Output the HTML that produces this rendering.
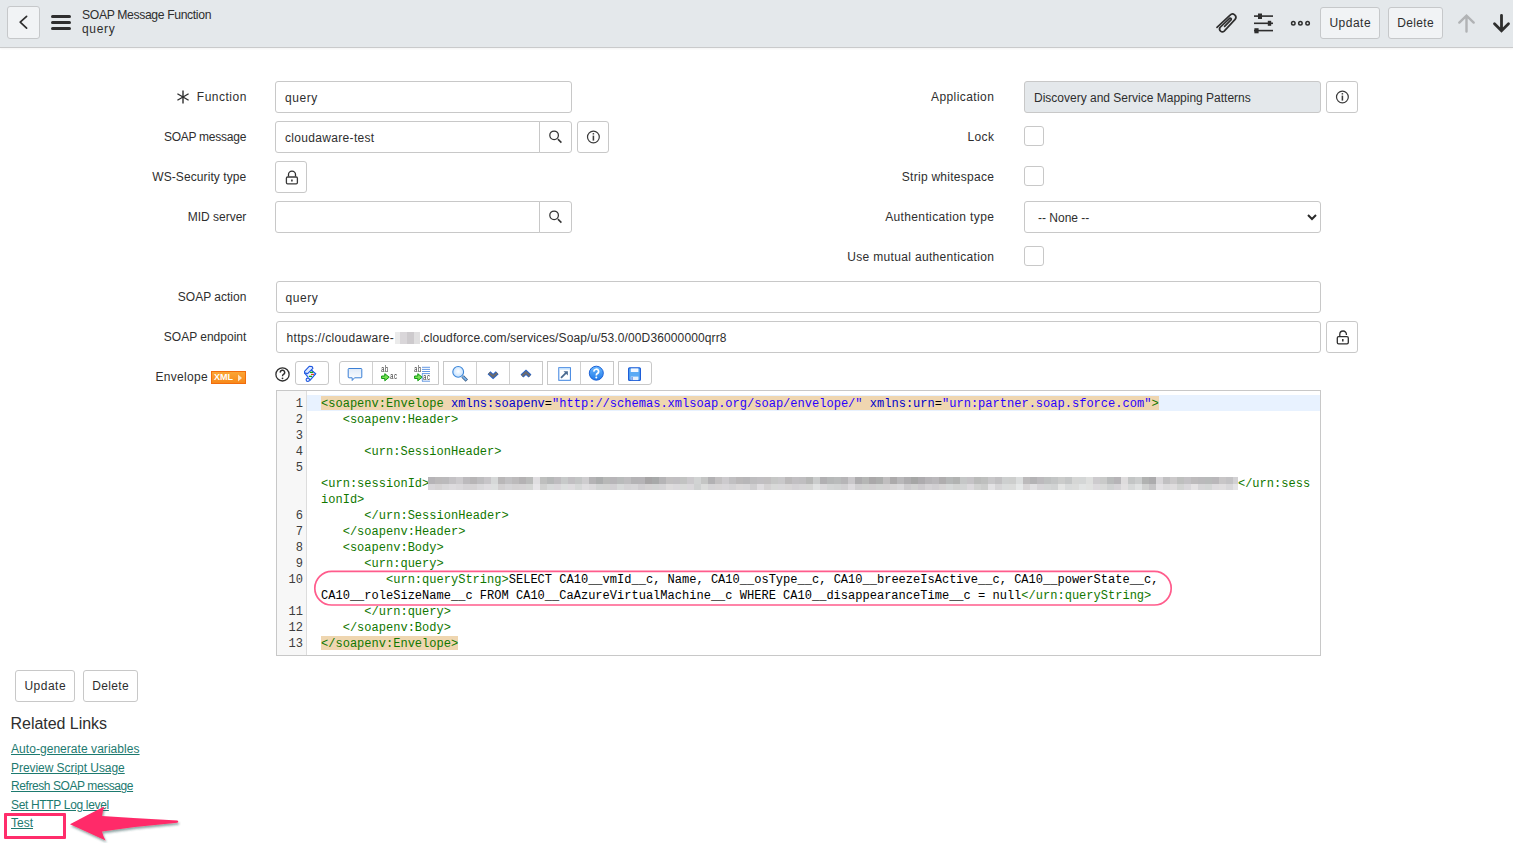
<!DOCTYPE html><html><head><meta charset="utf-8"><style>
*{box-sizing:border-box;margin:0;padding:0}
html,body{width:1513px;height:843px;overflow:hidden;background:#fff}
body{position:relative;font-family:"Liberation Sans",sans-serif;color:#2e2e2e;font-size:12px}
.a{position:absolute}
#hdr{position:absolute;left:0;top:0;width:1513px;height:48px;background:#e4e8eb;border-bottom:1px solid #c9cacb;box-shadow:0 1px 2px rgba(0,0,0,.05)}
.hbtn{position:absolute;height:32px;top:7px;border:1px solid #c6c8ca;border-radius:3px;background:#f1f3f5;color:#2e2e2e;font-size:12px;text-align:center;line-height:30px}
.bar{position:absolute;left:51px;width:20px;height:3px;border-radius:1.5px;background:#2e2e2e}
.lbl{position:absolute;white-space:nowrap;font-size:12px;line-height:32px;height:32px;color:#2e2e2e;text-align:right}
.inp{position:absolute;height:32px;border:1px solid #c8c8c8;border-radius:3px;background:#fff;font-size:12px;line-height:32px;padding-left:9px;white-space:nowrap;color:#2e2e2e;overflow:hidden}
.ibtn{position:absolute;width:32px;height:32px;border:1px solid #c8c8c8;border-radius:3px;background:#fff}
.ibtn svg,.sbtn svg{position:absolute;left:-1px;top:-1px}
.sbtn{position:absolute;width:33px;height:32px;border:1px solid #c8c8c8;border-radius:0 3px 3px 0;background:#fff}
.cb{position:absolute;left:1024px;width:20px;height:20px;border:1px solid #c8c8c8;border-radius:3px;background:#fff}
.tb{position:absolute;top:361px;height:24px;border:1px solid #c8c8c8;border-radius:3px;background:#fff}
.tb i{position:absolute;top:0;bottom:0;width:1px;background:#d0d0d0}
#ed{position:absolute;left:276px;top:390px;width:1045px;height:266px;border:1px solid #c8c8c8;background:#fff;overflow:hidden}
#gut{position:absolute;left:0;top:0;width:30px;height:264px;background:#f7f7f7;border-right:1px solid #dddddd}
.ln{position:absolute;width:26px;text-align:right;font-family:"Liberation Mono",monospace;font-size:12px;line-height:16px;color:#3c3c3c}
.row{position:absolute;left:44px;font-family:"Liberation Mono",monospace;font-size:12.04px;line-height:16px;white-space:pre;color:#000}
.t{color:#117700}.at{color:#0000cc}.s{color:#2a00ff}
.hl{background:linear-gradient(#efd6b0 calc(100% - 1px),transparent 0);padding-top:1px}
.lk{position:absolute;left:11px;font-size:12px;color:#1d7a6f;text-decoration:underline;white-space:nowrap;line-height:18px}
</style></head><body>
<div id="hdr">
<div class="hbtn" style="left:7px;top:6px;width:33px;height:33px"><svg class="a" style="left:0;top:0" width="32" height="32" viewBox="0 0 32 32"><path d="M18.6 9.4 L12.2 15.2 L18.6 21.2" fill="none" stroke="#2e2e2e" stroke-width="1.7" stroke-linecap="round" stroke-linejoin="round"/></svg></div>
<div class="bar" style="top:15px"></div><div class="bar" style="top:21px"></div><div class="bar" style="top:27px"></div>
<div class="a" style="left:82px;top:7.5px;font-size:12.2px;line-height:14px;white-space:nowrap;letter-spacing:-0.36px">SOAP Message Function</div><div class="a" style="left:82px;top:22px;font-size:12px;line-height:14px;white-space:nowrap;letter-spacing:0.7px">query</div>
<svg class="a" style="left:1212px;top:8px" width="30" height="28" viewBox="0 0 30 28"><path d="M5 19.3 L18.1 7.15 A3.3 3.3 0 0 1 23.1 11.45 L12.2 23.1 A2.8 2.8 0 0 1 8.0 19.5 L17.6 10.3 A1.1 1.1 0 0 1 19.2 11.7 L12.6 18.3" fill="none" stroke="#2e2e2e" stroke-width="1.7" stroke-linecap="round" stroke-linejoin="round"/></svg>
<svg class="a" style="left:1250px;top:8px" width="28" height="30" viewBox="0 0 28 30"><g fill="#2e2e2e"><rect x="4" y="7.3" width="19" height="1.6"/><rect x="4" y="14.5" width="19" height="1.6"/><rect x="4" y="21.8" width="19" height="1.6"/><rect x="8" y="5.5" width="4" height="5.5"/><rect x="17.8" y="12.8" width="3.4" height="5"/><rect x="4.4" y="20.2" width="4.2" height="5.1"/></g></svg>
<svg class="a" style="left:1288px;top:16px" width="26" height="14" viewBox="0 0 26 14"><g fill="none" stroke="#2e2e2e" stroke-width="1.5"><circle cx="5.3" cy="7.3" r="1.75"/><circle cx="12.4" cy="7.3" r="1.75"/><circle cx="19.6" cy="7.3" r="1.75"/></g></svg>
<div class="hbtn" style="left:1320px;width:60px;letter-spacing:0.5px;text-indent:0.5px">Update</div>
<div class="hbtn" style="left:1388px;width:55px;letter-spacing:0.35px;text-indent:0.35px">Delete</div>
<svg class="a" style="left:1455px;top:11px" width="22" height="24" viewBox="0 0 22 24"><path d="M11.5 20.6 V5.5 M4.3 11.6 L11.5 4.6 L18.7 11.6" fill="none" stroke="#b1b3b5" stroke-width="2.4" stroke-linecap="round" stroke-linejoin="miter"/></svg>
<svg class="a" style="left:1490px;top:12px" width="22" height="24" viewBox="0 0 22 24"><path d="M11.5 3.3 V18 M4.5 11.8 L11.5 18.8 L18.5 11.8" fill="none" stroke="#2e2e2e" stroke-width="2.8" stroke-linecap="round" stroke-linejoin="miter"/></svg>
</div>
<div class="lbl" style="right:1266.7px;top:81px;letter-spacing:0.49px;margin-right:-0.49px">Function</div>
<svg class="a" style="left:174px;top:88px" width="18" height="18" viewBox="0 0 18 18"><g stroke="#2e2e2e" stroke-width="1.4" stroke-linecap="butt"><path d="M9 2.5 V15.5"/><path d="M3.4 5.75 L14.6 12.25"/><path d="M3.4 12.25 L14.6 5.75"/></g></svg>
<div class="lbl" style="right:1266.7px;top:121px;letter-spacing:-0.25px;margin-right:0.25px">SOAP message</div>
<div class="lbl" style="right:1266.7px;top:161px;letter-spacing:0.09px;margin-right:-0.09px">WS-Security type</div>
<div class="lbl" style="right:1266.7px;top:201px;letter-spacing:0px;margin-right:0px">MID server</div>
<div class="lbl" style="right:1266.7px;top:281px;letter-spacing:0px;margin-right:0px">SOAP action</div>
<div class="lbl" style="right:1266.7px;top:321px;letter-spacing:0px;margin-right:0px">SOAP endpoint</div>
<div class="lbl" style="right:519.1px;top:81px;letter-spacing:0.42px;margin-right:-0.42px">Application</div>
<div class="lbl" style="right:519.1px;top:121px;letter-spacing:0.37px;margin-right:-0.37px">Lock</div>
<div class="lbl" style="right:519.1px;top:161px;letter-spacing:0.27px;margin-right:-0.27px">Strip whitespace</div>
<div class="lbl" style="right:519.1px;top:201px;letter-spacing:0.37px;margin-right:-0.37px">Authentication type</div>
<div class="lbl" style="right:519.1px;top:241px;letter-spacing:0.33px;margin-right:-0.33px">Use mutual authentication</div>
<div class="inp" style="left:275px;top:81px;width:297px;letter-spacing:0.55px">query</div>
<div class="inp" style="left:275px;top:121px;width:265px;border-radius:3px 0 0 3px;letter-spacing:0.32px">cloudaware-test</div>
<div class="sbtn" style="left:539px;top:121px"><svg width="32" height="32" viewBox="0 0 32 32"><circle cx="15.1" cy="14.3" r="4.3" fill="none" stroke="#333" stroke-width="1.25"/><path d="M18.9 18.1 L22.4 21.6" stroke="#333" stroke-width="1.5" stroke-linecap="butt"/></svg></div>
<div class="ibtn" style="left:577px;top:121px"><svg width="32" height="32" viewBox="0 0 32 32"><circle cx="16.4" cy="16" r="5.9" fill="none" stroke="#3a3a3a" stroke-width="1.2"/><rect x="15.65" y="12.1" width="1.5" height="1.4" fill="#3a3a3a"/><path d="M16.4 14.6 V19.6" stroke="#3a3a3a" stroke-width="1.55"/></svg></div>
<div class="ibtn" style="left:275px;top:161px"><svg width="32" height="32" viewBox="0 0 32 32"><path d="M13.5 15.5 V13.6 A3.5 3.5 0 0 1 20.5 13.6 V15.5" fill="none" stroke="#2e2e2e" stroke-width="1.3"/><rect x="11.4" y="16" width="11" height="6.8" rx="1.2" fill="none" stroke="#3a3a3a" stroke-width="1.3"/><path d="M16.9 18.4 V20.6" stroke="#2e2e2e" stroke-width="1.5"/></svg></div>
<div class="inp" style="left:275px;top:201px;width:265px;border-radius:3px 0 0 3px"></div>
<div class="sbtn" style="left:539px;top:201px"><svg width="32" height="32" viewBox="0 0 32 32"><circle cx="15.1" cy="14.3" r="4.3" fill="none" stroke="#333" stroke-width="1.25"/><path d="M18.9 18.1 L22.4 21.6" stroke="#333" stroke-width="1.5" stroke-linecap="butt"/></svg></div>
<div class="inp" style="left:1024px;top:81px;width:297px;background:#e4e8eb">Discovery and Service Mapping Patterns</div>
<div class="ibtn" style="left:1326px;top:81px"><svg width="32" height="32" viewBox="0 0 32 32"><circle cx="16.4" cy="16" r="5.9" fill="none" stroke="#3a3a3a" stroke-width="1.2"/><rect x="15.65" y="12.1" width="1.5" height="1.4" fill="#3a3a3a"/><path d="M16.4 14.6 V19.6" stroke="#3a3a3a" stroke-width="1.55"/></svg></div>
<div class="cb" style="top:126px"></div>
<div class="cb" style="top:166px"></div>
<div class="inp" style="left:1024px;top:201px;width:297px"><span style="margin-left:4px">-- None --</span><svg class="a" style="left:281px;top:9px" width="12" height="12" viewBox="0 0 12 12"><path d="M2 4 L6 8 L10 4" fill="none" stroke="#2a2a2a" stroke-width="2"/></svg></div>
<div class="cb" style="top:246px"></div>
<div class="inp" style="left:276px;top:281px;width:1045px;padding-left:8.5px;letter-spacing:0.55px">query</div>
<div class="inp" style="left:276px;top:321px;width:1045px;padding-left:9.5px"><span style="letter-spacing:0.33px">https://cloudaware-</span><span style="display:inline-block;vertical-align:-2px;margin-left:0.5px;margin-right:0.5px"><span style="display:inline-block;width:5px;height:12px;background:#ebebeb"></span><span style="display:inline-block;width:7px;height:12px;background:#d9d6d9"></span><span style="display:inline-block;width:7px;height:12px;background:#cdcacd"></span><span style="display:inline-block;width:6px;height:12px;background:#e0dfe0"></span></span><span style="letter-spacing:0.12px">.cloudforce.com/services/Soap/u/53.0/00D36000000qrr8</span></div>
<div class="ibtn" style="left:1326px;top:321px"><svg width="32" height="32" viewBox="0 0 32 32"><path d="M13.8 15.5 V13.3 A3.3 3.3 0 0 1 20.4 13.3 V14" fill="none" stroke="#2e2e2e" stroke-width="1.3"/><rect x="11.3" y="15.6" width="11" height="7.2" rx="1.3" fill="none" stroke="#2e2e2e" stroke-width="1.3"/><path d="M16.8 18 V20.6" stroke="#2e2e2e" stroke-width="1.5"/></svg></div>
<div class="a" style="left:155.5px;top:370px;font-size:12px;line-height:14px;white-space:nowrap;letter-spacing:0.29px">Envelope</div>
<div class="a" style="left:211px;top:371px;width:35px;height:13px;background:linear-gradient(#fba535,#f7891a);border:1px solid #f26c0c"><span class="a" style="left:2px;top:0px;color:#fff;font-weight:bold;font-size:9px;line-height:11px">XML</span><svg class="a" style="left:25px;top:2px" width="6" height="8" viewBox="0 0 6 8"><path d="M1 0.5 L5 4 L1 7.5Z" fill="#ffe3c0"/></svg></div>
<svg class="a" style="left:274px;top:366px" width="17" height="17" viewBox="0 0 17 17"><circle cx="8.5" cy="8.4" r="6.6" fill="none" stroke="#2e2e2e" stroke-width="1.3"/><path d="M6.3 6.6 A2.2 2.2 0 1 1 9.4 8.4 C8.6 8.8 8.5 9.3 8.5 10.3" fill="none" stroke="#2e2e2e" stroke-width="1.4"/><circle cx="8.5" cy="12.3" r="0.9" fill="#2e2e2e"/></svg>
<div class="tb" style="left:295px;width:34px;border-radius:3px"></div>
<div class="tb" style="left:339px;width:100px;border-radius:3px 0 0 3px"><i style="left:32px"></i><i style="left:65px"></i></div>
<div class="tb" style="left:443px;width:100px;border-radius:0"><i style="left:32px"></i><i style="left:65px"></i></div>
<div class="tb" style="left:547px;width:67px;border-radius:0"><i style="left:32px"></i></div>
<div class="tb" style="left:618px;width:34px;border-radius:0 3px 3px 0"></div>
<svg class="a" style="left:300px;top:362px" width="20" height="22" viewBox="300 362 20 22"><path d="M310.5 369.5 L315.6 373.8 L309.8 380.3 M304.3 372.6 L308.4 377.3" fill="none" stroke="#2463e6" stroke-width="1.1"/><path d="M310.5 369.8 L315.2 373.8 L309.8 380 L308 377.5 L304.5 373 Z" fill="#eef4ff"/><path d="M310.5 369.5 L315.6 373.8 L309.8 380.3 M304.3 372.6 L308.4 377.3" fill="none" stroke="#2463e6" stroke-width="1.1"/><path d="M304.5 371.3 L309.2 366.3 L312.2 366.6 L312.9 368.3 L307.6 373.6 L304.6 372.8 Z" fill="#dde9ff" stroke="#1f58e0" stroke-width="1.1" stroke-linejoin="round"/><circle cx="307.8" cy="379.8" r="1.7" fill="#eef4ff" stroke="#1f58e0" stroke-width="1.1"/><path d="M310 372.4 H313 M309 376.4 H312" stroke="#11aa11" stroke-width="1.1"/><path d="M311 374.4 H314" stroke="#e23a10" stroke-width="1.1"/></svg>
<svg class="a" style="left:345px;top:365px" width="20" height="18" viewBox="345 365 20 18"><defs><linearGradient id="gb" x1="0" y1="0" x2="0" y2="1"><stop offset="0" stop-color="#dfeaf8"/><stop offset="1" stop-color="#ffffff"/></linearGradient></defs><path d="M349 368.5 H361 A0.8 0.8 0 0 1 361.8 369.3 V377 A0.8 0.8 0 0 1 361 377.8 H354.5 L352.2 380.5 V377.8 H349 A0.8 0.8 0 0 1 348.2 377 V369.3 A0.8 0.8 0 0 1 349 368.5 Z" fill="url(#gb)" stroke="#3a7fd5" stroke-width="1"/></svg>
<div class="a" style="left:380.5px;top:366px;font-family:&quot;Liberation Mono&quot;,monospace;color:#3a3a3a;font-size:8.5px;line-height:8px;position:absolute;transform-origin:0 0;transform:scaleX(0.72)">ab</div>
<svg class="a" style="left:380.5px;top:372.5px" width="9" height="9" viewBox="380.5 372.5 9 9"><path d="M381.1 375.5 H384.3 V373.2 L388.7 376.7 L384.3 380.3 V378.0 H381.1 Z" fill="#77e055" stroke="#0f9a0f" stroke-width="1"/></svg>
<div class="a" style="left:389.5px;top:373px;font-family:&quot;Liberation Mono&quot;,monospace;color:#3a3a3a;font-size:8.5px;line-height:8px;position:absolute;transform-origin:0 0;transform:scaleX(0.72)">ac</div>
<div class="a" style="left:413.5px;top:366px;font-family:&quot;Liberation Mono&quot;,monospace;color:#3a3a3a;font-size:8.5px;line-height:8px;position:absolute;transform-origin:0 0;transform:scaleX(0.72)">ab</div>
<svg class="a" style="left:413.5px;top:372.5px" width="9" height="9" viewBox="413.5 372.5 9 9"><path d="M414.1 375.5 H417.3 V373.2 L421.7 376.7 L417.3 380.3 V378.0 H414.1 Z" fill="#77e055" stroke="#0f9a0f" stroke-width="1"/></svg>
<div class="a" style="left:422.5px;top:373.5px;font-family:&quot;Liberation Mono&quot;,monospace;color:#3a3a3a;font-size:8.5px;line-height:8px;position:absolute;transform-origin:0 0;transform:scaleX(0.72)">ac</div>
<svg class="a" style="left:420px;top:366px" width="12" height="17" viewBox="420 366 12 17"><path d="M422 367.3 H430 M422 369.4 H430 M422 371.5 H430 M422 373.6 H430 M422 381.2 H430" stroke="#3d7fdc" stroke-width="0.8"/><path d="M422.3 373.6 V381.2" stroke="#3d7fdc" stroke-width="0.7"/></svg>
<svg class="a" style="left:450px;top:363px" width="20" height="20" viewBox="450 363 20 20"><defs><radialGradient id="mg" cx="0.5" cy="0.45" r="0.6"><stop offset="0" stop-color="#ffffff"/><stop offset="1" stop-color="#b9dcff"/></radialGradient></defs><path d="M462.6 376.4 L466.8 380.6" stroke="#3a5a80" stroke-width="3.4" stroke-linecap="butt"/><path d="M462.8 376.6 L466.4 380.2" stroke="#7ab6f0" stroke-width="1.8"/><circle cx="458.2" cy="371.9" r="5.4" fill="url(#mg)" stroke="#3d86d8" stroke-width="1.1"/></svg>
<svg class="a" style="left:485px;top:368px" width="16" height="13" viewBox="485 368 16 13"><path d="M489 372.8 L493.1 376.5 L497.2 372.8" fill="none" stroke="#1f62d0" stroke-width="4.2" stroke-linejoin="miter"/><path d="M489 372.8 L493.1 376.5 L497.2 372.8" fill="none" stroke="#6b6b70" stroke-width="2.4" stroke-linejoin="miter"/></svg>
<svg class="a" style="left:518px;top:367px" width="16" height="13" viewBox="518 367 16 13"><path d="M522 376 L526 372.3 L530 376" fill="none" stroke="#1f62d0" stroke-width="4.2" stroke-linejoin="miter"/><path d="M522 376 L526 372.3 L530 376" fill="none" stroke="#6b6b70" stroke-width="2.4" stroke-linejoin="miter"/></svg>
<svg class="a" style="left:556px;top:365px" width="17" height="18" viewBox="556 365 17 18"><rect x="558.8" y="367.7" width="11.6" height="12.6" fill="#fff" stroke="#3b82e0" stroke-width="1"/><rect x="559.3" y="368.2" width="10.6" height="1.4" fill="#bfe0ff"/><path d="M561 377.8 L566 372.8" stroke="#4a6a90" stroke-width="1.8"/><path d="M563.5 371.2 H567.9 V375.6 Z" fill="#4a6a90"/></svg>
<svg class="a" style="left:587px;top:364px" width="19" height="19" viewBox="587 364 19 19"><defs><linearGradient id="hg" x1="0" y1="0" x2="0" y2="1"><stop offset="0" stop-color="#6ab8ff"/><stop offset="1" stop-color="#1f7ae8"/></linearGradient></defs><circle cx="596.3" cy="373.2" r="7" fill="url(#hg)" stroke="#1e62d6" stroke-width="1"/><path d="M594 371.6 A2.3 2.3 0 1 1 597.2 373.6 C596.5 374 596.3 374.4 596.3 375.4" fill="none" stroke="#fff" stroke-width="1.7"/><circle cx="596.3" cy="377.6" r="1" fill="#fff"/></svg>
<svg class="a" style="left:626px;top:365px" width="17" height="18" viewBox="626 365 17 18"><rect x="628.6" y="367.8" width="11.8" height="12.6" rx="1" fill="#5aaaf5" stroke="#1e5ed8" stroke-width="1.2"/><rect x="630.8" y="368.4" width="7.6" height="3.6" fill="#f4f8ff"/><rect x="630.8" y="376.6" width="7.6" height="3.5" fill="#e6f0fc"/><rect x="631.6" y="377" width="0.9" height="3.2" fill="#1e5ed8"/></svg>
<div id="ed"><div id="gut"></div><div class="a" style="left:30px;top:4px;width:1013px;height:16px;background:#e8f2ff"></div><div class="ln" style="left:0;top:5px">1</div><div class="row" style="top:5px"><span class="hl"><span class="t">&lt;soapenv:Envelope</span> <span class="at">xmlns:soapenv</span>=<span class="s">&quot;http://schemas.xmlsoap.org/soap/envelope/&quot;</span> <span class="at">xmlns:urn</span>=<span class="s">&quot;urn:partner.soap.sforce.com&quot;</span><span class="t">&gt;</span></span></div><div class="ln" style="left:0;top:21px">2</div><div class="row" style="top:21px">   <span class="t">&lt;soapenv:Header&gt;</span></div><div class="ln" style="left:0;top:37px">3</div><div class="row" style="top:37px"></div><div class="ln" style="left:0;top:53px">4</div><div class="row" style="top:53px">      <span class="t">&lt;urn:SessionHeader&gt;</span></div><div class="ln" style="left:0;top:69px">5</div><div class="row" style="top:69px"></div><div class="row" style="top:85px"><span class="t">&lt;urn:sessionId&gt;</span><span style="display:inline-block;width:808.6px"></span><span class="t">&lt;/urn:sess</span></div><div class="row" style="top:101px"><span class="t">ionId&gt;</span></div><div class="ln" style="left:0;top:117px">6</div><div class="row" style="top:117px">      <span class="t">&lt;/urn:SessionHeader&gt;</span></div><div class="ln" style="left:0;top:133px">7</div><div class="row" style="top:133px">   <span class="t">&lt;/soapenv:Header&gt;</span></div><div class="ln" style="left:0;top:149px">8</div><div class="row" style="top:149px">   <span class="t">&lt;soapenv:Body&gt;</span></div><div class="ln" style="left:0;top:165px">9</div><div class="row" style="top:165px">      <span class="t">&lt;urn:query&gt;</span></div><div class="ln" style="left:0;top:181px">10</div><div class="row" style="top:181px">         <span class="t">&lt;urn:queryString&gt;</span>SELECT CA10__vmId__c, Name, CA10__osType__c, CA10__breezeIsActive__c, CA10__powerState__c,</div><div class="row" style="top:197px">CA10__roleSizeName__c FROM CA10__CaAzureVirtualMachine__c WHERE CA10__disappearanceTime__c = null<span class="t">&lt;/urn:queryString&gt;</span></div><div class="ln" style="left:0;top:213px">11</div><div class="row" style="top:213px">      <span class="t">&lt;/urn:query&gt;</span></div><div class="ln" style="left:0;top:229px">12</div><div class="row" style="top:229px">   <span class="t">&lt;/soapenv:Body&gt;</span></div><div class="ln" style="left:0;top:245px">13</div><div class="row" style="top:245px"><span class="hl"><span class="t">&lt;/soapenv:Envelope&gt;</span></span></div><div class="a" style="left:151px;top:86px;width:7px;height:7px;background:rgb(182,180,183)"></div><div class="a" style="left:151px;top:93px;width:7px;height:6px;background:rgb(216,214,217)"></div><div class="a" style="left:158px;top:86px;width:7px;height:7px;background:rgb(187,185,186)"></div><div class="a" style="left:158px;top:93px;width:7px;height:6px;background:rgb(213,211,212)"></div><div class="a" style="left:165px;top:86px;width:7px;height:7px;background:rgb(187,186,188)"></div><div class="a" style="left:165px;top:93px;width:7px;height:6px;background:rgb(217,216,218)"></div><div class="a" style="left:172px;top:86px;width:7px;height:7px;background:rgb(196,194,197)"></div><div class="a" style="left:172px;top:93px;width:7px;height:6px;background:rgb(221,219,222)"></div><div class="a" style="left:179px;top:86px;width:7px;height:7px;background:rgb(204,202,205)"></div><div class="a" style="left:179px;top:93px;width:7px;height:6px;background:rgb(218,216,219)"></div><div class="a" style="left:186px;top:86px;width:7px;height:7px;background:rgb(188,186,189)"></div><div class="a" style="left:186px;top:93px;width:7px;height:6px;background:rgb(213,211,214)"></div><div class="a" style="left:193px;top:86px;width:7px;height:7px;background:rgb(183,181,182)"></div><div class="a" style="left:193px;top:93px;width:7px;height:6px;background:rgb(213,211,212)"></div><div class="a" style="left:200px;top:86px;width:7px;height:7px;background:rgb(190,189,191)"></div><div class="a" style="left:200px;top:93px;width:7px;height:6px;background:rgb(218,217,219)"></div><div class="a" style="left:207px;top:86px;width:7px;height:7px;background:rgb(199,197,200)"></div><div class="a" style="left:207px;top:93px;width:7px;height:6px;background:rgb(223,221,224)"></div><div class="a" style="left:214px;top:86px;width:7px;height:7px;background:rgb(214,216,216)"></div><div class="a" style="left:214px;top:93px;width:7px;height:6px;background:rgb(221,223,223)"></div><div class="a" style="left:221px;top:86px;width:7px;height:7px;background:rgb(185,183,184)"></div><div class="a" style="left:221px;top:93px;width:7px;height:6px;background:rgb(210,208,209)"></div><div class="a" style="left:228px;top:86px;width:7px;height:7px;background:rgb(193,192,194)"></div><div class="a" style="left:228px;top:93px;width:7px;height:6px;background:rgb(214,213,215)"></div><div class="a" style="left:235px;top:86px;width:7px;height:7px;background:rgb(188,186,187)"></div><div class="a" style="left:235px;top:93px;width:7px;height:6px;background:rgb(212,210,211)"></div><div class="a" style="left:242px;top:86px;width:7px;height:7px;background:rgb(180,178,179)"></div><div class="a" style="left:242px;top:93px;width:7px;height:6px;background:rgb(213,211,212)"></div><div class="a" style="left:249px;top:86px;width:7px;height:7px;background:rgb(186,187,186)"></div><div class="a" style="left:249px;top:93px;width:7px;height:6px;background:rgb(213,214,213)"></div><div class="a" style="left:256px;top:86px;width:7px;height:7px;background:rgb(224,222,225)"></div><div class="a" style="left:256px;top:93px;width:7px;height:6px;background:rgb(231,229,232)"></div><div class="a" style="left:263px;top:86px;width:7px;height:7px;background:rgb(190,191,190)"></div><div class="a" style="left:263px;top:93px;width:7px;height:6px;background:rgb(208,209,208)"></div><div class="a" style="left:270px;top:86px;width:7px;height:7px;background:rgb(182,184,184)"></div><div class="a" style="left:270px;top:93px;width:7px;height:6px;background:rgb(216,218,218)"></div><div class="a" style="left:277px;top:86px;width:7px;height:7px;background:rgb(190,188,191)"></div><div class="a" style="left:277px;top:93px;width:7px;height:6px;background:rgb(217,215,218)"></div><div class="a" style="left:284px;top:86px;width:7px;height:7px;background:rgb(199,201,201)"></div><div class="a" style="left:284px;top:93px;width:7px;height:6px;background:rgb(220,222,222)"></div><div class="a" style="left:291px;top:86px;width:7px;height:7px;background:rgb(193,191,194)"></div><div class="a" style="left:291px;top:93px;width:7px;height:6px;background:rgb(222,220,223)"></div><div class="a" style="left:298px;top:86px;width:7px;height:7px;background:rgb(195,197,197)"></div><div class="a" style="left:298px;top:93px;width:7px;height:6px;background:rgb(214,216,216)"></div><div class="a" style="left:305px;top:86px;width:7px;height:7px;background:rgb(206,205,207)"></div><div class="a" style="left:305px;top:93px;width:7px;height:6px;background:rgb(223,222,224)"></div><div class="a" style="left:312px;top:86px;width:7px;height:7px;background:rgb(180,179,181)"></div><div class="a" style="left:312px;top:93px;width:7px;height:6px;background:rgb(219,218,220)"></div><div class="a" style="left:319px;top:86px;width:7px;height:7px;background:rgb(171,173,173)"></div><div class="a" style="left:319px;top:93px;width:7px;height:6px;background:rgb(210,212,212)"></div><div class="a" style="left:326px;top:86px;width:7px;height:7px;background:rgb(183,184,183)"></div><div class="a" style="left:326px;top:93px;width:7px;height:6px;background:rgb(210,211,210)"></div><div class="a" style="left:333px;top:86px;width:7px;height:7px;background:rgb(183,181,184)"></div><div class="a" style="left:333px;top:93px;width:7px;height:6px;background:rgb(210,208,211)"></div><div class="a" style="left:340px;top:86px;width:7px;height:7px;background:rgb(185,187,187)"></div><div class="a" style="left:340px;top:93px;width:7px;height:6px;background:rgb(216,218,218)"></div><div class="a" style="left:347px;top:86px;width:7px;height:7px;background:rgb(190,189,191)"></div><div class="a" style="left:347px;top:93px;width:7px;height:6px;background:rgb(213,212,214)"></div><div class="a" style="left:354px;top:86px;width:7px;height:7px;background:rgb(180,179,181)"></div><div class="a" style="left:354px;top:93px;width:7px;height:6px;background:rgb(215,214,216)"></div><div class="a" style="left:361px;top:86px;width:7px;height:7px;background:rgb(181,179,182)"></div><div class="a" style="left:361px;top:93px;width:7px;height:6px;background:rgb(208,206,209)"></div><div class="a" style="left:368px;top:86px;width:7px;height:7px;background:rgb(166,164,165)"></div><div class="a" style="left:368px;top:93px;width:7px;height:6px;background:rgb(212,210,211)"></div><div class="a" style="left:375px;top:86px;width:7px;height:7px;background:rgb(167,169,169)"></div><div class="a" style="left:375px;top:93px;width:7px;height:6px;background:rgb(210,212,212)"></div><div class="a" style="left:382px;top:86px;width:7px;height:7px;background:rgb(181,180,182)"></div><div class="a" style="left:382px;top:93px;width:7px;height:6px;background:rgb(213,212,214)"></div><div class="a" style="left:389px;top:86px;width:7px;height:7px;background:rgb(194,192,193)"></div><div class="a" style="left:389px;top:93px;width:7px;height:6px;background:rgb(222,220,221)"></div><div class="a" style="left:396px;top:86px;width:7px;height:7px;background:rgb(193,191,194)"></div><div class="a" style="left:396px;top:93px;width:7px;height:6px;background:rgb(219,217,220)"></div><div class="a" style="left:403px;top:86px;width:7px;height:7px;background:rgb(194,195,194)"></div><div class="a" style="left:403px;top:93px;width:7px;height:6px;background:rgb(217,218,217)"></div><div class="a" style="left:410px;top:86px;width:7px;height:7px;background:rgb(203,201,204)"></div><div class="a" style="left:410px;top:93px;width:7px;height:6px;background:rgb(218,216,219)"></div><div class="a" style="left:417px;top:86px;width:7px;height:7px;background:rgb(209,211,211)"></div><div class="a" style="left:417px;top:93px;width:7px;height:6px;background:rgb(207,209,209)"></div><div class="a" style="left:424px;top:86px;width:7px;height:7px;background:rgb(196,197,196)"></div><div class="a" style="left:424px;top:93px;width:7px;height:6px;background:rgb(219,220,219)"></div><div class="a" style="left:431px;top:86px;width:7px;height:7px;background:rgb(178,177,179)"></div><div class="a" style="left:431px;top:93px;width:7px;height:6px;background:rgb(213,212,214)"></div><div class="a" style="left:438px;top:86px;width:7px;height:7px;background:rgb(194,192,193)"></div><div class="a" style="left:438px;top:93px;width:7px;height:6px;background:rgb(215,213,214)"></div><div class="a" style="left:445px;top:86px;width:7px;height:7px;background:rgb(204,202,205)"></div><div class="a" style="left:445px;top:93px;width:7px;height:6px;background:rgb(216,214,217)"></div><div class="a" style="left:452px;top:86px;width:7px;height:7px;background:rgb(192,191,193)"></div><div class="a" style="left:452px;top:93px;width:7px;height:6px;background:rgb(212,211,213)"></div><div class="a" style="left:459px;top:86px;width:7px;height:7px;background:rgb(186,184,185)"></div><div class="a" style="left:459px;top:93px;width:7px;height:6px;background:rgb(218,216,217)"></div><div class="a" style="left:466px;top:86px;width:7px;height:7px;background:rgb(183,182,184)"></div><div class="a" style="left:466px;top:93px;width:7px;height:6px;background:rgb(216,215,217)"></div><div class="a" style="left:473px;top:86px;width:7px;height:7px;background:rgb(190,189,191)"></div><div class="a" style="left:473px;top:93px;width:7px;height:6px;background:rgb(207,206,208)"></div><div class="a" style="left:480px;top:86px;width:7px;height:7px;background:rgb(193,191,194)"></div><div class="a" style="left:480px;top:93px;width:7px;height:6px;background:rgb(223,221,224)"></div><div class="a" style="left:487px;top:86px;width:7px;height:7px;background:rgb(193,191,192)"></div><div class="a" style="left:487px;top:93px;width:7px;height:6px;background:rgb(212,210,211)"></div><div class="a" style="left:494px;top:86px;width:7px;height:7px;background:rgb(198,199,198)"></div><div class="a" style="left:494px;top:93px;width:7px;height:6px;background:rgb(216,217,216)"></div><div class="a" style="left:501px;top:86px;width:7px;height:7px;background:rgb(201,200,202)"></div><div class="a" style="left:501px;top:93px;width:7px;height:6px;background:rgb(217,216,218)"></div><div class="a" style="left:508px;top:86px;width:7px;height:7px;background:rgb(187,185,186)"></div><div class="a" style="left:508px;top:93px;width:7px;height:6px;background:rgb(216,214,215)"></div><div class="a" style="left:515px;top:86px;width:7px;height:7px;background:rgb(193,191,194)"></div><div class="a" style="left:515px;top:93px;width:7px;height:6px;background:rgb(212,210,213)"></div><div class="a" style="left:522px;top:86px;width:7px;height:7px;background:rgb(191,190,192)"></div><div class="a" style="left:522px;top:93px;width:7px;height:6px;background:rgb(214,213,215)"></div><div class="a" style="left:529px;top:86px;width:7px;height:7px;background:rgb(182,183,182)"></div><div class="a" style="left:529px;top:93px;width:7px;height:6px;background:rgb(213,214,213)"></div><div class="a" style="left:536px;top:86px;width:7px;height:7px;background:rgb(202,204,204)"></div><div class="a" style="left:536px;top:93px;width:7px;height:6px;background:rgb(224,226,226)"></div><div class="a" style="left:543px;top:86px;width:7px;height:7px;background:rgb(177,176,178)"></div><div class="a" style="left:543px;top:93px;width:7px;height:6px;background:rgb(219,218,220)"></div><div class="a" style="left:550px;top:86px;width:7px;height:7px;background:rgb(182,184,184)"></div><div class="a" style="left:550px;top:93px;width:7px;height:6px;background:rgb(212,214,214)"></div><div class="a" style="left:557px;top:86px;width:7px;height:7px;background:rgb(185,187,187)"></div><div class="a" style="left:557px;top:93px;width:7px;height:6px;background:rgb(210,212,212)"></div><div class="a" style="left:564px;top:86px;width:7px;height:7px;background:rgb(182,181,183)"></div><div class="a" style="left:564px;top:93px;width:7px;height:6px;background:rgb(209,208,210)"></div><div class="a" style="left:571px;top:86px;width:7px;height:7px;background:rgb(201,199,202)"></div><div class="a" style="left:571px;top:93px;width:7px;height:6px;background:rgb(221,219,222)"></div><div class="a" style="left:578px;top:86px;width:7px;height:7px;background:rgb(173,172,174)"></div><div class="a" style="left:578px;top:93px;width:7px;height:6px;background:rgb(208,207,209)"></div><div class="a" style="left:585px;top:86px;width:7px;height:7px;background:rgb(181,182,181)"></div><div class="a" style="left:585px;top:93px;width:7px;height:6px;background:rgb(209,210,209)"></div><div class="a" style="left:592px;top:86px;width:7px;height:7px;background:rgb(170,168,169)"></div><div class="a" style="left:592px;top:93px;width:7px;height:6px;background:rgb(210,208,209)"></div><div class="a" style="left:599px;top:86px;width:7px;height:7px;background:rgb(173,174,173)"></div><div class="a" style="left:599px;top:93px;width:7px;height:6px;background:rgb(211,212,211)"></div><div class="a" style="left:606px;top:86px;width:7px;height:7px;background:rgb(192,190,191)"></div><div class="a" style="left:606px;top:93px;width:7px;height:6px;background:rgb(212,210,211)"></div><div class="a" style="left:613px;top:86px;width:7px;height:7px;background:rgb(172,170,171)"></div><div class="a" style="left:613px;top:93px;width:7px;height:6px;background:rgb(216,214,215)"></div><div class="a" style="left:620px;top:86px;width:7px;height:7px;background:rgb(185,184,186)"></div><div class="a" style="left:620px;top:93px;width:7px;height:6px;background:rgb(219,218,220)"></div><div class="a" style="left:627px;top:86px;width:7px;height:7px;background:rgb(174,173,175)"></div><div class="a" style="left:627px;top:93px;width:7px;height:6px;background:rgb(205,204,206)"></div><div class="a" style="left:634px;top:86px;width:7px;height:7px;background:rgb(165,166,165)"></div><div class="a" style="left:634px;top:93px;width:7px;height:6px;background:rgb(209,210,209)"></div><div class="a" style="left:641px;top:86px;width:7px;height:7px;background:rgb(173,171,174)"></div><div class="a" style="left:641px;top:93px;width:7px;height:6px;background:rgb(205,203,206)"></div><div class="a" style="left:648px;top:86px;width:7px;height:7px;background:rgb(182,180,183)"></div><div class="a" style="left:648px;top:93px;width:7px;height:6px;background:rgb(213,211,214)"></div><div class="a" style="left:655px;top:86px;width:7px;height:7px;background:rgb(186,184,187)"></div><div class="a" style="left:655px;top:93px;width:7px;height:6px;background:rgb(209,207,210)"></div><div class="a" style="left:662px;top:86px;width:7px;height:7px;background:rgb(175,173,174)"></div><div class="a" style="left:662px;top:93px;width:7px;height:6px;background:rgb(214,212,213)"></div><div class="a" style="left:669px;top:86px;width:7px;height:7px;background:rgb(181,183,183)"></div><div class="a" style="left:669px;top:93px;width:7px;height:6px;background:rgb(215,217,217)"></div><div class="a" style="left:676px;top:86px;width:7px;height:7px;background:rgb(177,178,177)"></div><div class="a" style="left:676px;top:93px;width:7px;height:6px;background:rgb(211,212,211)"></div><div class="a" style="left:683px;top:86px;width:7px;height:7px;background:rgb(197,199,199)"></div><div class="a" style="left:683px;top:93px;width:7px;height:6px;background:rgb(211,213,213)"></div><div class="a" style="left:690px;top:86px;width:7px;height:7px;background:rgb(197,195,198)"></div><div class="a" style="left:690px;top:93px;width:7px;height:6px;background:rgb(220,218,221)"></div><div class="a" style="left:697px;top:86px;width:7px;height:7px;background:rgb(186,187,186)"></div><div class="a" style="left:697px;top:93px;width:7px;height:6px;background:rgb(209,210,209)"></div><div class="a" style="left:704px;top:86px;width:7px;height:7px;background:rgb(190,191,190)"></div><div class="a" style="left:704px;top:93px;width:7px;height:6px;background:rgb(204,205,204)"></div><div class="a" style="left:711px;top:86px;width:7px;height:7px;background:rgb(200,199,201)"></div><div class="a" style="left:711px;top:93px;width:7px;height:6px;background:rgb(227,226,228)"></div><div class="a" style="left:718px;top:86px;width:7px;height:7px;background:rgb(193,192,194)"></div><div class="a" style="left:718px;top:93px;width:7px;height:6px;background:rgb(214,213,215)"></div><div class="a" style="left:725px;top:86px;width:7px;height:7px;background:rgb(205,207,207)"></div><div class="a" style="left:725px;top:93px;width:7px;height:6px;background:rgb(218,220,220)"></div><div class="a" style="left:732px;top:86px;width:7px;height:7px;background:rgb(205,206,205)"></div><div class="a" style="left:732px;top:93px;width:7px;height:6px;background:rgb(219,220,219)"></div><div class="a" style="left:739px;top:86px;width:7px;height:7px;background:rgb(219,221,221)"></div><div class="a" style="left:739px;top:93px;width:7px;height:6px;background:rgb(230,232,232)"></div><div class="a" style="left:746px;top:86px;width:7px;height:7px;background:rgb(188,186,187)"></div><div class="a" style="left:746px;top:93px;width:7px;height:6px;background:rgb(216,214,215)"></div><div class="a" style="left:753px;top:86px;width:7px;height:7px;background:rgb(180,179,181)"></div><div class="a" style="left:753px;top:93px;width:7px;height:6px;background:rgb(225,224,226)"></div><div class="a" style="left:760px;top:86px;width:7px;height:7px;background:rgb(188,186,189)"></div><div class="a" style="left:760px;top:93px;width:7px;height:6px;background:rgb(215,213,216)"></div><div class="a" style="left:767px;top:86px;width:7px;height:7px;background:rgb(190,192,192)"></div><div class="a" style="left:767px;top:93px;width:7px;height:6px;background:rgb(212,214,214)"></div><div class="a" style="left:774px;top:86px;width:7px;height:7px;background:rgb(195,197,197)"></div><div class="a" style="left:774px;top:93px;width:7px;height:6px;background:rgb(209,211,211)"></div><div class="a" style="left:781px;top:86px;width:7px;height:7px;background:rgb(203,204,203)"></div><div class="a" style="left:781px;top:93px;width:7px;height:6px;background:rgb(228,229,228)"></div><div class="a" style="left:788px;top:86px;width:7px;height:7px;background:rgb(196,198,198)"></div><div class="a" style="left:788px;top:93px;width:7px;height:6px;background:rgb(217,219,219)"></div><div class="a" style="left:795px;top:86px;width:7px;height:7px;background:rgb(213,214,213)"></div><div class="a" style="left:795px;top:93px;width:7px;height:6px;background:rgb(219,220,219)"></div><div class="a" style="left:802px;top:86px;width:7px;height:7px;background:rgb(212,214,214)"></div><div class="a" style="left:802px;top:93px;width:7px;height:6px;background:rgb(226,228,228)"></div><div class="a" style="left:809px;top:86px;width:7px;height:7px;background:rgb(222,223,222)"></div><div class="a" style="left:809px;top:93px;width:7px;height:6px;background:rgb(225,226,225)"></div><div class="a" style="left:816px;top:86px;width:7px;height:7px;background:rgb(205,203,206)"></div><div class="a" style="left:816px;top:93px;width:7px;height:6px;background:rgb(220,218,221)"></div><div class="a" style="left:823px;top:86px;width:7px;height:7px;background:rgb(201,202,201)"></div><div class="a" style="left:823px;top:93px;width:7px;height:6px;background:rgb(217,218,217)"></div><div class="a" style="left:830px;top:86px;width:7px;height:7px;background:rgb(185,187,187)"></div><div class="a" style="left:830px;top:93px;width:7px;height:6px;background:rgb(208,210,210)"></div><div class="a" style="left:837px;top:86px;width:7px;height:7px;background:rgb(182,180,183)"></div><div class="a" style="left:837px;top:93px;width:7px;height:6px;background:rgb(214,212,215)"></div><div class="a" style="left:844px;top:86px;width:7px;height:7px;background:rgb(222,220,221)"></div><div class="a" style="left:844px;top:93px;width:7px;height:6px;background:rgb(226,224,225)"></div><div class="a" style="left:851px;top:86px;width:7px;height:7px;background:rgb(195,197,197)"></div><div class="a" style="left:851px;top:93px;width:7px;height:6px;background:rgb(215,217,217)"></div><div class="a" style="left:858px;top:86px;width:7px;height:7px;background:rgb(203,205,205)"></div><div class="a" style="left:858px;top:93px;width:7px;height:6px;background:rgb(224,226,226)"></div><div class="a" style="left:865px;top:86px;width:7px;height:7px;background:rgb(177,178,177)"></div><div class="a" style="left:865px;top:93px;width:7px;height:6px;background:rgb(208,209,208)"></div><div class="a" style="left:872px;top:86px;width:7px;height:7px;background:rgb(172,171,173)"></div><div class="a" style="left:872px;top:93px;width:7px;height:6px;background:rgb(197,196,198)"></div><div class="a" style="left:879px;top:86px;width:7px;height:7px;background:rgb(216,214,217)"></div><div class="a" style="left:879px;top:93px;width:7px;height:6px;background:rgb(227,225,228)"></div><div class="a" style="left:886px;top:86px;width:7px;height:7px;background:rgb(193,192,194)"></div><div class="a" style="left:886px;top:93px;width:7px;height:6px;background:rgb(220,219,221)"></div><div class="a" style="left:893px;top:86px;width:7px;height:7px;background:rgb(203,201,202)"></div><div class="a" style="left:893px;top:93px;width:7px;height:6px;background:rgb(223,221,222)"></div><div class="a" style="left:900px;top:86px;width:7px;height:7px;background:rgb(190,191,190)"></div><div class="a" style="left:900px;top:93px;width:7px;height:6px;background:rgb(211,212,211)"></div><div class="a" style="left:907px;top:86px;width:7px;height:7px;background:rgb(195,193,196)"></div><div class="a" style="left:907px;top:93px;width:7px;height:6px;background:rgb(218,216,219)"></div><div class="a" style="left:914px;top:86px;width:7px;height:7px;background:rgb(189,187,188)"></div><div class="a" style="left:914px;top:93px;width:7px;height:6px;background:rgb(229,227,228)"></div><div class="a" style="left:921px;top:86px;width:7px;height:7px;background:rgb(186,185,187)"></div><div class="a" style="left:921px;top:93px;width:7px;height:6px;background:rgb(215,214,216)"></div><div class="a" style="left:928px;top:86px;width:7px;height:7px;background:rgb(184,186,186)"></div><div class="a" style="left:928px;top:93px;width:7px;height:6px;background:rgb(212,214,214)"></div><div class="a" style="left:935px;top:86px;width:7px;height:7px;background:rgb(185,183,186)"></div><div class="a" style="left:935px;top:93px;width:7px;height:6px;background:rgb(222,220,223)"></div><div class="a" style="left:942px;top:86px;width:7px;height:7px;background:rgb(200,198,199)"></div><div class="a" style="left:942px;top:93px;width:7px;height:6px;background:rgb(224,222,223)"></div><div class="a" style="left:949px;top:86px;width:7px;height:7px;background:rgb(195,194,196)"></div><div class="a" style="left:949px;top:93px;width:7px;height:6px;background:rgb(217,216,218)"></div><div class="a" style="left:956px;top:86px;width:5px;height:7px;background:rgb(210,209,211)"></div><div class="a" style="left:956px;top:93px;width:5px;height:6px;background:rgb(228,227,229)"></div><svg class="a" style="left:0;top:0" width="1043" height="264" viewBox="277 391 1043 264"><rect x="314.8" y="571.4" width="856.4" height="33.6" rx="16.8" fill="none" stroke="#ff5c8c" stroke-width="1.7"/></svg></div>
<div class="hbtn" style="left:15px;top:670px;width:60px;background:#fff;border-color:#c8c8c8;letter-spacing:0.5px;text-indent:0.5px">Update</div>
<div class="hbtn" style="left:83px;top:670px;width:55px;background:#fff;border-color:#c8c8c8;letter-spacing:0.35px;text-indent:0.35px">Delete</div>
<div class="a" style="left:10.5px;top:713.5px;font-size:16px;line-height:20px;white-space:nowrap;letter-spacing:-0.03px;color:#2e2e2e">Related Links</div>
<div class="lk" style="top:739.6px;letter-spacing:0.05px">Auto-generate variables</div>
<div class="lk" style="top:758.6px;letter-spacing:-0.05px">Preview Script Usage</div>
<div class="lk" style="top:777.2px;letter-spacing:-0.42px">Refresh SOAP message</div>
<div class="lk" style="top:795.7px;letter-spacing:-0.33px">Set HTTP Log level</div>
<div class="lk" style="top:814.2px;letter-spacing:0px">Test</div>
<div class="a" style="left:4px;top:813px;width:62px;height:26px;border:3px solid #ff2d6b;border-radius:1px"></div>
<svg class="a" style="left:60px;top:798px;overflow:visible" width="130" height="45" viewBox="0 -2 130 45"><defs><filter id="shf" x="-20%" y="-30%" width="150%" height="180%"><feGaussianBlur in="SourceAlpha" stdDeviation="0.9" result="b"/><feOffset in="b" dx="1.2" dy="1.8" result="o"/><feFlood flood-color="#1f4a4a" flood-opacity="0.5" result="c"/><feComposite in="c" in2="o" operator="in" result="s"/><feMerge><feMergeNode in="s"/><feMergeNode in="SourceGraphic"/></feMerge></filter></defs><g filter="url(#shf)"><path d="M10 24.3 Q27 15 44.2 6.4 Q42.6 11 42.1 15.9 Q80 18.5 117.3 20.4 Q119.2 21.6 117.3 22.8 Q80 26 42 31.4 Q43 36 45.6 40.4 Q27 32 10 24.3 Z" fill="#ff2a69"/></g></svg>
</body></html>
